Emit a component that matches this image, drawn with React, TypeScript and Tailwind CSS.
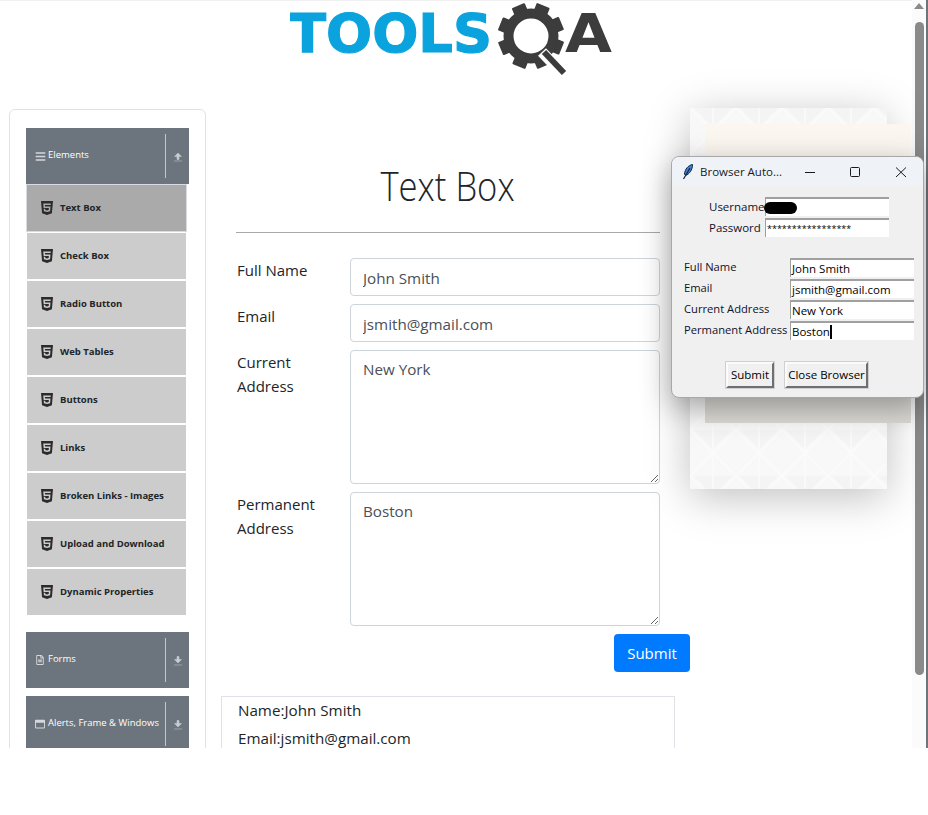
import { FaBars, FaHtml5, FaRegFileAlt, FaRegWindowMaximize } from 'react-icons/fa';

const sans = 'font-["Open_Sans","Liberation_Sans",sans-serif]';

const items = [
  'Text Box',
  'Check Box',
  'Radio Button',
  'Web Tables',
  'Buttons',
  'Links',
  'Broken Links - Images',
  'Upload and Download',
  'Dynamic Properties',
];

function Logo() {
  return (
    <svg width="324" height="76" viewBox="0 0 324 76" className="block">
      <text
        x="-1"
        y="50"
        textLength="203"
        lengthAdjust="spacingAndGlyphs"
        fontFamily="'DejaVu Sans', sans-serif"
        fontWeight="700"
        fontSize="54"
        fill="#0aa3dd"
        stroke="#0aa3dd"
        strokeWidth="1.2"
      >
        TOOLS
      </text>
      <g transform="translate(241 34)" fill="#3c3c3c">
        {[0, 45, 90, 135, 180, 225, 270, 315].map((a) => (
          <rect key={a} x="-7" y="-33" width="14" height="12" rx="1" transform={`rotate(${a + 22})`} />
        ))}
        <circle r="22.5" fill="none" stroke="#3c3c3c" strokeWidth="10" />
      </g>
      <path d="M252 50 L273 72" stroke="#fff" strokeWidth="11" />
      <path d="M254 50 L274 71" stroke="#3c3c3c" strokeWidth="6" />
      <text x="275" y="50" textLength="47" lengthAdjust="spacingAndGlyphs" fontFamily="'DejaVu Sans', sans-serif" fontWeight="700" fontSize="54" fill="#3c3c3c">
        A
      </text>
    </svg>
  );
}

function Arrow({ up }: { up?: boolean }) {
  return (
    <svg width="10" height="10" viewBox="0 0 10 10" className="block">
      <path
        d={up ? 'M5 1 L8.5 4.5 H6 V7.5 H4 V4.5 H1.5 Z M1 9 H9' : 'M4 0.5 H6 V3.5 H8.5 L5 7 L1.5 3.5 H4 Z M1 9 H9'}
        fill="#c9ccd0"
        stroke="#c9ccd0"
        strokeWidth="0.5"
      />
    </svg>
  );
}

function GroupHeader({ icon, label, up }: { icon: React.ReactNode; label: string; up?: boolean }) {
  return (
    <div className="flex h-14 w-[163px] items-center bg-[#6c757d] pl-[7px]">
      <span className="flex w-[14px] justify-center text-[#d5d8db]">{icon}</span>
      <span className="ml-[1px] flex-1 whitespace-nowrap pb-[2px] text-[9.5px] text-white">{label}</span>
      <span className="flex h-11 w-[24px] shrink-0 items-center justify-center border-l border-[#c4c8cb] pt-[2px]">
        <Arrow up={up} />
      </span>
    </div>
  );
}

function Sidebar() {
  return (
    <aside className="ml-[9px] h-[700px] w-[197px] shrink-0 rounded-t-md border border-[#e2e2e2] pl-4 pt-[18px]">
      <GroupHeader icon={<FaBars size={11} />} label="Elements" up />
      <ul className="mt-px flex flex-col gap-[2px]">
        {items.map((item, i) => (
          <li
            key={item}
            className={`ml-[1px] flex h-[46px] w-[159px] items-center pl-[12px] text-[9.5px] font-bold text-[#212529] ${
              i === 0 ? 'bg-[#aaaaaa] outline outline-1 outline-[#d8dbe2]' : 'bg-[#cccccc]'
            }`}
          >
            <FaHtml5 size={16} className="mr-[5px] text-[#2b2b2b]" />
            {item}
          </li>
        ))}
      </ul>
      <div className="mt-[17px] flex flex-col gap-2">
        <GroupHeader icon={<FaRegFileAlt size={10} />} label="Forms" />
        <GroupHeader icon={<FaRegWindowMaximize size={10} />} label="Alerts, Frame & Windows" />
      </div>
    </aside>
  );
}

function Field({ label, children }: { label: string; children: React.ReactNode }) {
  return (
    <div className="flex">
      <label className="w-[114px] shrink-0 pl-[1px] pr-6 text-[15px] leading-6 text-[#212529]">{label}</label>
      {children}
    </div>
  );
}

const fieldClass =
  'w-[310px] rounded border border-[#ced4da] bg-white px-3 text-[15.2px] leading-6 text-[#495057] outline-none';

function Main() {
  return (
    <main className="ml-[15px] w-[469px]">
      <div className="ml-[15px] w-[424px] border-b border-[#a9a9a9] pb-[19px] pt-[50px] text-center">
        <h1 className="inline-block scale-x-[0.865] text-[40px] font-light leading-[54px] text-[#212529]">Text Box</h1>
      </div>
      <form className="ml-[15px] mt-[25px] flex w-[454px] flex-col gap-2">
        <Field label="Full Name">
          <input readOnly defaultValue="John Smith" className={`h-[38px] pt-[2px] ${fieldClass}`} />
        </Field>
        <Field label="Email">
          <input readOnly defaultValue="jsmith@gmail.com" className={`h-[38px] pt-[2px] ${fieldClass}`} />
        </Field>
        <Field label="Current Address">
          <textarea readOnly defaultValue="New York" className={`h-[134px] py-[6px] ${fieldClass}`} />
        </Field>
        <Field label="Permanent Address">
          <textarea readOnly defaultValue="Boston" className={`h-[134px] py-[6px] ${fieldClass}`} />
        </Field>
        <div className="flex justify-end">
          <button type="button" className="h-[38px] w-[76px] rounded bg-[#007bff] text-[15px] text-white">
            Submit
          </button>
        </div>
      </form>
      <div className="mt-6 h-[120px] w-[454px] border border-[#dee2e6] pl-4 text-[15.2px] text-[#212529]">
        <p className="leading-[26px]">Name:John Smith</p>
        <p className="mt-[2px] leading-[26px]">Email:jsmith@gmail.com</p>
      </div>
    </main>
  );
}

function TkEntry({ value, caret, stars }: { value: string; caret?: boolean; stars?: boolean }) {
  return (
    <div
      className={`flex h-[19px] w-[124px] items-center border-l border-t-2 border-[#a0a0a0] bg-white pl-[1px] leading-none text-black ${
        stars ? 'text-[9px]' : 'text-[11.5px]'
      }`}
    >
      {value}
      {caret && <span className="h-[14px] w-[2px] bg-black" />}
    </div>
  );
}

function TkButton({ children, className }: { children: React.ReactNode; className: string }) {
  return (
    <button
      type="button"
      className={`h-[26px] whitespace-nowrap border-2 border-b-[#6f6f6f] border-l-[#fbfbfb] border-r-[#6f6f6f] border-t-[#fbfbfb] bg-[#f0f0f0] text-[11.5px] text-black shadow-[0_0_0_1px_#d0d0d0] ${className}`}
    >
      {children}
    </button>
  );
}

function AutomationWindow() {
  const lower = [
    ['Full Name', 'John Smith'],
    ['Email', 'jsmith@gmail.com'],
    ['Current Address', 'New York'],
    ['Permanent Address', 'Boston'],
  ];
  return (
    <div className="absolute left-[671px] top-[156px] z-20 h-[242px] w-[253px] overflow-hidden rounded-lg border border-[#a8a8a8] bg-[#f0f0f0] shadow-[0_10px_30px_rgba(0,0,0,0.35)]">
      <div className="flex h-[29px] items-center bg-[#eff3f8] pl-[10px] text-[11.5px] text-[#1a1a1a]">
        <svg width="12" height="16" viewBox="0 0 12 16" className="mr-[6px] shrink-0">
          <path d="M10.5 0.5 C6 1.5 3 5 2.5 10 L3.5 11.5 C7.5 10 10.5 6 10.5 0.5 Z" fill="#3f7fd6" stroke="#10233f" strokeWidth="1" />
          <path d="M8 4 L1.5 15" stroke="#10233f" strokeWidth="1.2" />
        </svg>
        <span className="w-[95px] whitespace-nowrap">Browser Auto...</span>
        <svg width="120" height="12" viewBox="0 0 120 12" fill="none" stroke="#1a1a1a" strokeWidth="1">
          <path d="M10 6.5 H20" />
          <rect x="55.5" y="1.5" width="9" height="9" rx="1" />
          <path d="M101 1.5 L111 11 M111 1.5 L101 11" />
        </svg>
      </div>
      <div className="relative ml-[37px] mt-[11px] flex flex-col gap-[2px] text-[11.5px] text-[#10102a]">
        <div className="flex items-center">
          <span className="w-[56px]">Username</span>
          <TkEntry value="" />
        </div>
        <div className="flex items-center">
          <span className="w-[56px]">Password</span>
          <TkEntry value="*****************" stars />
        </div>
        <span className="absolute left-[55px] top-[5px] h-3 w-[33px] rounded-md bg-black" />
      </div>
      <div className="ml-3 mt-[21px] flex flex-col gap-[2px] text-[11.2px] text-[#10102a]">
        {lower.map(([label, value], i) => (
          <div key={label} className="flex items-center">
            <span className="w-[106px] whitespace-nowrap">{label}</span>
            <TkEntry value={value} caret={i === 3} />
          </div>
        ))}
      </div>
      <div className="ml-[54px] mt-[22px] flex gap-[11px]">
        <TkButton className="w-[48px]">Submit</TkButton>
        <TkButton className="w-[83px]">Close Browser</TkButton>
      </div>
    </div>
  );
}

function BackdropCard() {
  return (
    <>
      <div className="absolute left-[690px] top-[108px] z-10 h-[381px] w-[197px] bg-[#f8f8f8] shadow-[0_8px_40px_rgba(0,0,0,0.25)]">
        <svg width="197" height="381" className="block">
          <defs>
            <pattern id="tri" width="46" height="46" patternUnits="userSpaceOnUse">
              <path d="M4 0 H42 L23 19 Z" fill="#f4f4f4" />
              <path d="M0 0 L23 23 L46 0 M0 46 L23 23 L46 46 M23 0 V46" fill="none" stroke="#fbfbfb" strokeWidth="1.5" />
            </pattern>
          </defs>
          <rect width="197" height="381" fill="url(#tri)" />
        </svg>
      </div>
      <div className="absolute left-[705px] top-[124px] z-10 h-[299px] w-[206px] bg-gradient-to-b from-[#fbf6ef] via-[#f6f2ec] to-[#dcdad5]" />
    </>
  );
}

export default function App() {
  return (
    <div className={`h-[815px] w-[928px] overflow-hidden bg-white ${sans}`}>
      <div className="relative flex h-[748px] overflow-hidden">
        <div className="min-w-0 flex-1">
          <header className="flex h-[109px] justify-center border-t border-[#f0f0f0] pr-[8px] pt-px">
            <Logo />
          </header>
          <div className="flex">
            <Sidebar />
            <Main />
          </div>
        </div>
        <BackdropCard />
        <AutomationWindow />
        <div className="flex w-[14px] shrink-0 flex-col items-center bg-[#fbfbfb] pt-[3px]">
          <div className="h-0 w-0 border-x-[5px] border-b-[6px] border-x-transparent border-b-[#8a8a8a]" />
          <div className="mt-[13px] h-[653px] w-[9px] rounded-full bg-[#8a8a8a]" />
        </div>
        <div className="w-[2px] shrink-0 bg-[#6f747a]" />
      </div>
    </div>
  );
}
